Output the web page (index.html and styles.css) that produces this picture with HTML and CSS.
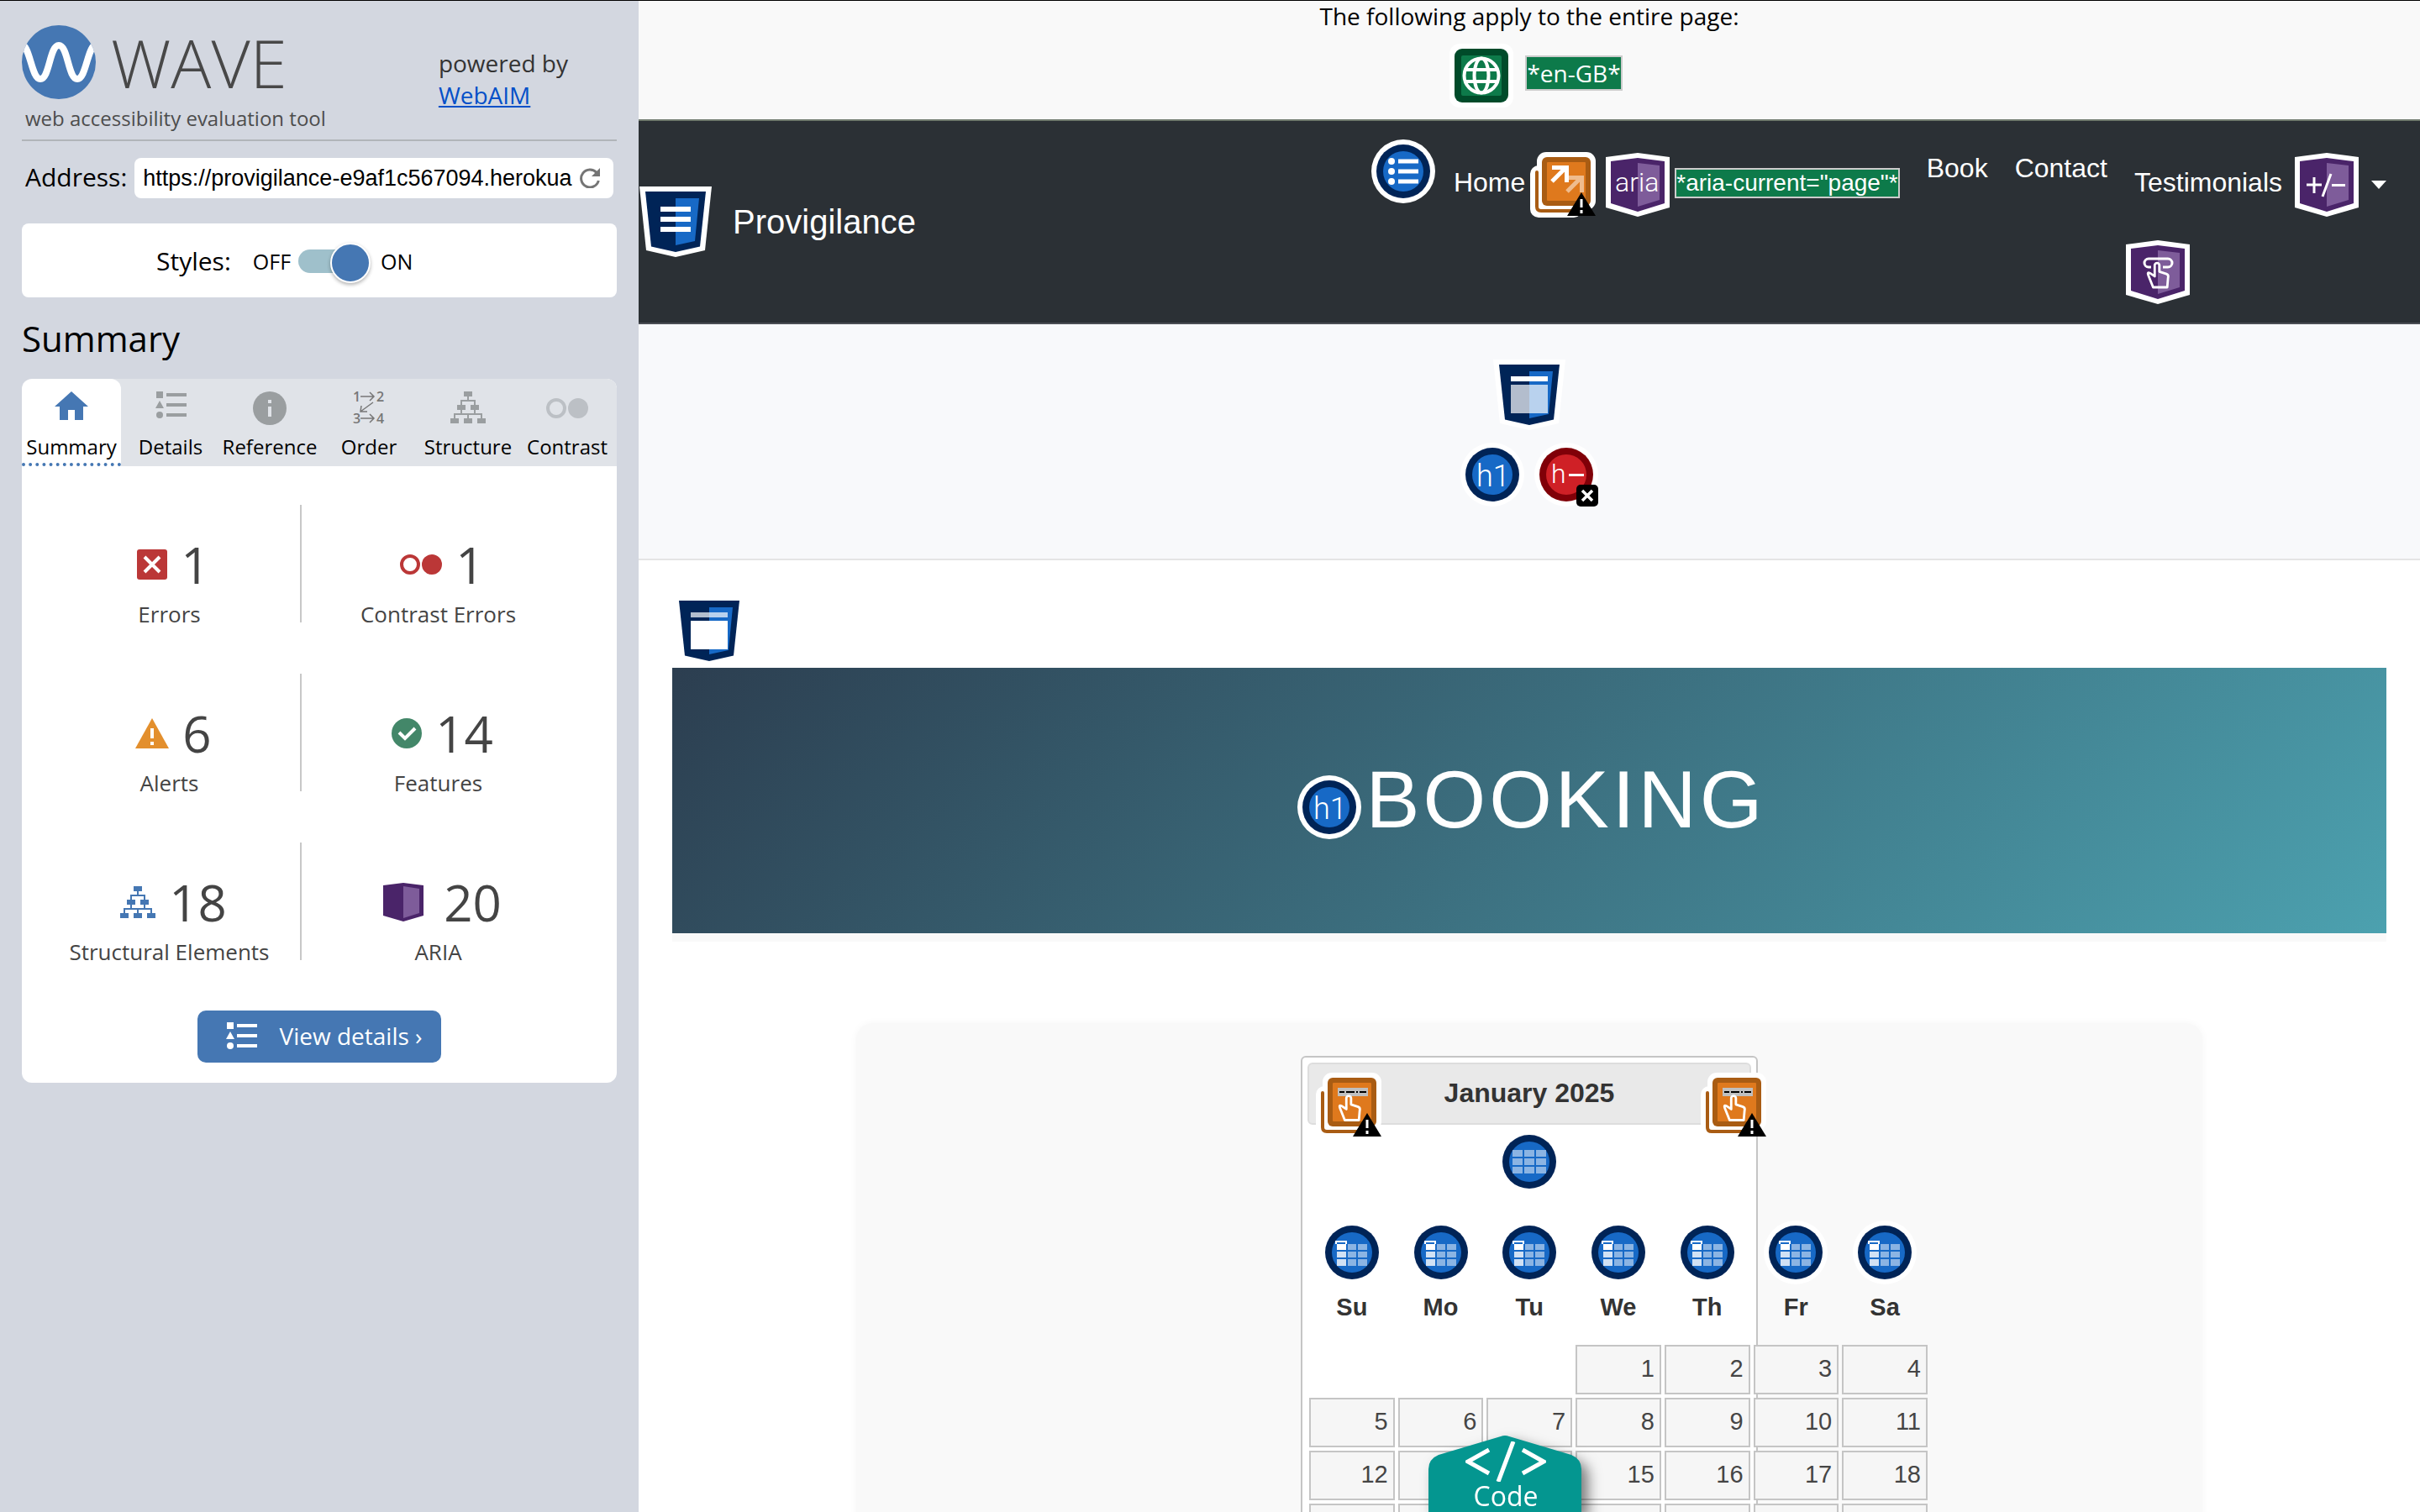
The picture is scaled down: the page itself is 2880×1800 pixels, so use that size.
FILE: index.html
```html
<!DOCTYPE html>
<html lang="en-GB">
<head>
<meta charset="utf-8">
<title>WAVE Report - Provigilance</title>
<link rel="stylesheet" href="styles.css">
</head>
<body>
<svg class="sprite" aria-hidden="true">
  <symbol id="i-blue" viewBox="0 0 76 76"><circle cx="38" cy="38" r="38" fill="#fff"/><circle cx="38" cy="38" r="32" fill="#002457"/><circle cx="38" cy="38" r="24" fill="#1769c6"/></symbol>
  <symbol id="i-table" viewBox="0 0 76 76"><use href="#i-blue"/><path fill="#8bb4e3" d="M18 24h12v8H18zM32 24h12v8H32zM46 24h12v8H46zM18 34h12v8H18zM32 34h12v8H32zM46 34h12v8H46zM18 44h12v8H18zM32 44h12v8H32zM46 44h12v8H46z"/></symbol>
  <symbol id="i-th" viewBox="0 0 76 76"><use href="#i-blue"/><path fill="none" stroke="#fff" stroke-width="2" d="M19 28v-3h12v3"/><path fill="#fff" d="M20 28h11v7H20z"/><path fill="#d1e1f4" d="M20 37h11v7H20zM20 46h11v8H20z"/><path fill="#8bb4e3" d="M33 28h10v7H33zM45 28h11v7H45zM33 37h10v7H33zM45 37h11v7H45zM33 46h10v8H33zM45 46h11v8H45z"/></symbol>
  <symbol id="i-lang" viewBox="0 0 76 76"><rect width="76" height="76" rx="12" fill="#fff"/><rect x="6" y="6" width="64" height="64" rx="9" fill="#004b2a"/><rect x="14" y="14" width="48" height="48" rx="2" fill="#0d7a4a"/><g fill="none" stroke="#fff" stroke-width="4"><circle cx="38" cy="38" r="20.500"/><ellipse cx="38" cy="38" rx="8.500" ry="20.500"/><path d="M19 31h38M19 45h38"/></g></symbol>
  <symbol id="i-shield" viewBox="0 0 86 84"><path fill="#fff" d="M0 0h86l-8 76-35 8-35-8z"/><path fill="#002457" d="M7 6h72l-7 65.500L43 78l-29-6.500z"/><path fill="#1769c6" d="M43 14h28l-5 51-23 5z"/></symbol>
  <symbol id="i-aria" viewBox="0 0 76 76"><path fill="#fff" d="M0 5l38-5 38 5v60L38 76 0 65z"/><path fill="#4a2469" d="M6 10l32-4 32 4v50L38 70 6 60z"/><path fill="#7e5c9a" d="M38 12l26 3v41l-26 8z"/></symbol>
  <symbol id="i-alert" viewBox="0 0 78 78"><rect y="16" width="62" height="62" rx="10" fill="#fff"/><rect x="8" width="70" height="69" rx="11" fill="#fff"/><path fill="none" stroke="#a95c13" stroke-width="4" stroke-linecap="round" d="M8 24v41q0 5 5 5h45"/><rect x="14" y="6" width="58" height="58" rx="6" fill="#a95c13"/><rect x="20" y="12" width="46" height="46" rx="1" fill="#df791d"/></symbol>
  <symbol id="i-warn" viewBox="0 0 78 78"><path fill="#000" d="M61 48l17 28H44z"/><path fill="#fff" d="M59.500 56h3v10h-3zM59.500 69h3v4h-3z"/></symbol>
  <symbol id="i-hand" viewBox="0 0 30 36"><path fill="none" stroke="#fff" stroke-width="3" stroke-linejoin="round" d="M11 19V5a3 3 0 0 1 6 0v8l9 3q3 1 2 5l-1 12H9L3 18q-2-5 2-3z"/></symbol>
  <symbol id="i-details" viewBox="0 0 37 32"><path d="M1 0h8v8H1zM5 11l5 9H0zM13 2h24v4H13zM13 14h24v4H13zM13 26h24v4H13z"/><circle cx="5" cy="28" r="4"/></symbol>
  <symbol id="i-tree" viewBox="0 0 42 38"><path d="M16 0h10v6H16zM8 16h10v6H8zM24 16h10v6H24zM0 32h10v6H0zM16 32h10v6H16zM32 32h10v6H32z"/><path fill="none" stroke="currentColor" stroke-width="2" d="M21 6v5M13 16v-5h16v5M13 22v5M29 22v5M5 32v-5h32v5M21 27v5"/></symbol>
  <symbol id="i-dots" viewBox="0 0 50 24"><circle cx="12" cy="12" r="10" fill="none" stroke="currentColor" stroke-width="4"/><circle cx="38" cy="12" r="12"/></symbol>
  <symbol id="i-prevnext" viewBox="0 0 78 78"><use href="#i-alert"/><path fill="#bfbfbf" d="M26 18h36v10H26z"/><path fill="#000" d="M28 22h6v2h-6zM36 22h10v2H36zM48 22h2v2h-2zM52 22h8v2h-8z"/><use href="#i-hand" x="26" y="25" width="28" height="35"/><use href="#i-warn"/></symbol>
</svg>

<aside class="sidebar">
  <header class="brandbar">
    <div>
      <div class="logo-row">
        <svg class="logo" viewBox="0 0 88 88"><defs><clipPath id="lc"><circle cx="44" cy="44" r="44"/></clipPath></defs><circle cx="44" cy="44" r="44" fill="#4577b3"/><path clip-path="url(#lc)" fill="none" stroke="#fff" stroke-width="8" d="M-2 22C10 22 11 64 22 64S33 24 44 24s11 40 22 40S78 22 90 22"/></svg>
        <span class="logo-name">WAVE</span>
      </div>
      <p class="tagline">web accessibility evaluation tool</p>
    </div>
    <p class="powered">powered by<br><a href="#webaim">WebAIM</a></p>
  </header>

  <form class="address">
    <label for="url">Address:</label>
    <div class="url-box">
      <input id="url" type="text" value="https://provigilance-e9af1c567094.herokua">
      <button type="button" class="reload" aria-label="Reload"><svg viewBox="0 0 24 24"><path fill="none" stroke="#757575" stroke-width="3" d="M20 5.500A10.500 10.500 0 1 0 22.300 15"/><path fill="#757575" d="M24 0v10H14z"/></svg></button>
    </div>
  </form>

  <div class="styles-box">
    <label for="styles" class="styles-label">Styles:</label>
    <span class="state">OFF</span>
    <input id="styles" class="toggle" type="checkbox" role="switch" checked>
    <span class="state">ON</span>
  </div>

  <h2 class="panel-title">Summary</h2>
  <section class="panel">
    <div class="tabs" role="tablist">
      <button class="tab active" role="tab" aria-selected="true"><svg width="40" height="40" viewBox="0 0 40 40"><path fill="#4577b3" d="M20 0l20 18h-6v16H24V22h-8v12H6V18H0z"/></svg>Summary</button>
      <button class="tab" role="tab"><svg width="37" height="40" viewBox="0 0 37 40"><use href="#i-details" width="37" height="32"/></svg>Details</button>
      <button class="tab" role="tab"><svg width="40" height="40" viewBox="0 0 40 40"><circle cx="20" cy="20" r="20"/><path fill="#e0e3e8" d="M18 10h4v4h-4zM18 18h4v12h-4z"/></svg>Reference</button>
      <button class="tab order" role="tab"><svg width="38" height="40" viewBox="0 0 38 40"><g class="order-num"><text x="0" y="12">1</text><text x="28" y="12">2</text><text x="0" y="38">3</text><text x="28" y="38">4</text></g><path fill="none" stroke="#777" stroke-width="1.500" d="M9 6h16M20 1l5 5-5 5M9 32h16M20 27l5 5-5 5M24 13L9 24M10 17l-1 7h8"/></svg>Order</button>
      <button class="tab" role="tab"><svg width="42" height="40" viewBox="0 0 42 40"><use href="#i-tree" width="42" height="38"/></svg>Structure</button>
      <button class="tab faint" role="tab"><svg width="50" height="40" viewBox="0 0 50 40"><use href="#i-dots" y="8" width="50" height="24"/></svg>Contrast</button>
    </div>
    <div class="stats">
      <div class="stat"><p class="count"><svg width="36" height="36" viewBox="0 0 36 36"><rect width="36" height="36" rx="3" fill="#bb3737"/><path stroke="#fff" stroke-width="4" d="M9 9l18 18M27 9L9 27"/></svg>1</p><p class="name">Errors</p></div>
      <div class="stat"><p class="count red"><svg width="50" height="24"><use href="#i-dots" width="50" height="24"/></svg>1</p><p class="name">Contrast Errors</p></div>
      <div class="stat"><p class="count"><svg width="40" height="36" viewBox="0 0 40 36"><path fill="#e38f2d" d="M20 0l20 36H0z"/><path fill="#fff" d="M18 12h4v12h-4zM18 28h4v4h-4z"/></svg>6</p><p class="name">Alerts</p></div>
      <div class="stat"><p class="count"><svg width="36" height="36" viewBox="0 0 36 36"><circle cx="18" cy="18" r="18" fill="#438769"/><path fill="none" stroke="#fff" stroke-width="4" d="M9 17l7 7 12-12"/></svg>14</p><p class="name">Features</p></div>
      <div class="stat"><p class="count blue"><svg width="42" height="38"><use href="#i-tree" width="42" height="38"/></svg>18</p><p class="name">Structural Elements</p></div>
      <div class="stat"><p class="count wide"><svg width="48" height="46" viewBox="0 0 48 46"><path fill="#4a2469" d="M0 3l24-3 24 3v36L24 46 0 39z"/><path fill="#7e5c9a" d="M24 4l19 3v29l-19 6z"/></svg>20</p><p class="name">ARIA</p></div>
    </div>
    <button class="view-details"><svg width="37" height="32"><use href="#i-details" width="37" height="32"/></svg>View details ›</button>
  </section>
</aside>

<main class="page">
  <section class="page-flags">
    <p>The following apply to the entire page:</p>
    <div class="flag-row">
      <svg class="ico"><use href="#i-lang"/></svg>
      <span class="flag-text">*en-GB*</span>
    </div>
  </section>

  <nav class="site-nav">
    <div class="site-brand">
      <svg class="shield" viewBox="0 0 86 84"><use href="#i-shield"/><path fill="#fff" d="M25 24h36v6H25zM25 36h36v6H25zM25 48h36v6H25z"/></svg>
      <a href="#home">Provigilance</a>
    </div>
    <ul class="menu">
      <li class="menu-start"><svg class="ico" viewBox="0 0 76 76"><use href="#i-blue"/><g fill="#fff"><circle cx="24" cy="26" r="4"/><circle cx="24" cy="38" r="4"/><circle cx="24" cy="50" r="4"/><path d="M32 23.500h24v5H32zM32 35.500h24v5H32zM32 47.500h24v5H32z"/></g></svg></li>
      <li class="menu-row menu-home">
        <a href="#home">Home</a>
        <svg class="ico-alert" viewBox="0 0 78 78"><use href="#i-alert"/><g fill="none" stroke="#fff" stroke-width="5"><path d="M26 18.500h17.500V36M26 35l17-17"/><path opacity=".5" d="M46 30.500h15.500V48M44 47l17-17"/></g><use href="#i-warn"/></svg>
        <svg class="ico" viewBox="0 0 76 76"><use href="#i-aria"/><text x="11" y="46" class="glyph glyph-32">aria</text></svg>
        <span class="flag-text aria-text">*aria-current="page"*</span>
      </li>
      <li class="menu-plain"><a href="#book">Book</a></li>
      <li class="menu-plain"><a href="#contact">Contact</a></li>
      <li>
        <div class="menu-row menu-drop">
          <a href="#testimonials">Testimonials</a>
          <svg class="ico" viewBox="0 0 76 76"><use href="#i-aria"/><path fill="none" stroke="#fff" stroke-width="3" d="M14 38h18M23 29v19M33 52l10-27M44 38.500h16"/></svg>
          <svg class="caret" width="18" height="10" viewBox="0 0 18 10"><path fill="#fff" d="M0 0h18L9 10z"/></svg>
        </div>
        <svg class="ico drop-mark" viewBox="0 0 76 76"><use href="#i-aria"/><path fill="none" stroke="#fff" stroke-width="3" d="M30 32h-3a5 5 0 0 1 0-10h23a5 5 0 0 1 0 10h-6"/><use href="#i-hand" x="24" y="25" width="28" height="34"/></svg>
      </li>
    </ul>
  </nav>

  <header class="head-area">
    <svg class="shield" viewBox="0 0 86 84"><use href="#i-shield"/><path fill="#fff" d="M21 20h44v6H21z"/><path fill="#fff" opacity=".7" d="M21 30h44v34H21z"/></svg>
    <div class="head-marks">
      <svg class="ico" viewBox="0 0 76 76"><use href="#i-blue"/><text x="19" y="52" class="glyph glyph-36">h1</text></svg>
      <svg class="ico" viewBox="0 0 76 76"><circle cx="38" cy="38" r="38" fill="#fff"/><circle cx="38" cy="38" r="32" fill="#800008"/><circle cx="38" cy="38" r="24" fill="#cf2026"/><text x="20" y="48" class="glyph glyph-32">h</text><path fill="#fff" d="M41 37h18v3H41z"/><rect x="50" y="50" width="26" height="26" rx="5"/><path stroke="#fff" stroke-width="3.500" d="M57 57l12 12M69 57L57 69"/></svg>
    </div>
  </header>

  <div class="content">
    <svg class="shield" viewBox="0 0 86 84"><use href="#i-shield"/><path fill="#fff" opacity=".7" d="M21 20h44v6H21z"/><path fill="#fff" d="M21 30h44v34H21z"/></svg>
    <section class="hero">
      <svg class="ico hero-mark" viewBox="0 0 76 76"><use href="#i-blue"/><text x="19" y="52" class="glyph glyph-36">h1</text></svg>
      <h1>BOOKING</h1>
    </section>
    <section class="booking">
      <div class="picker">
        <div class="picker-head">
          <button class="step prev" aria-label="Prev"><svg class="ico-alert"><use href="#i-prevnext"/></svg></button>
          January 2025
          <button class="step next" aria-label="Next"><svg class="ico-alert"><use href="#i-prevnext"/></svg></button>
        </div>
        <div class="table-mark"><svg class="ico"><use href="#i-table"/></svg></div>
        <table class="days">
          <thead><tr>
            <th><svg class="ico"><use href="#i-th"/></svg>Su</th>
            <th><svg class="ico"><use href="#i-th"/></svg>Mo</th>
            <th><svg class="ico"><use href="#i-th"/></svg>Tu</th>
            <th><svg class="ico"><use href="#i-th"/></svg>We</th>
            <th><svg class="ico"><use href="#i-th"/></svg>Th</th>
            <th><svg class="ico"><use href="#i-th"/></svg>Fr</th>
            <th><svg class="ico"><use href="#i-th"/></svg>Sa</th>
          </tr></thead>
          <tbody>
            <tr><td></td><td></td><td></td><td><a href="#1">1</a></td><td><a href="#2">2</a></td><td><a href="#3">3</a></td><td><a href="#4">4</a></td></tr>
            <tr><td><a href="#5">5</a></td><td><a href="#6">6</a></td><td><a href="#7">7</a></td><td><a href="#8">8</a></td><td><a href="#9">9</a></td><td><a href="#10">10</a></td><td><a href="#11">11</a></td></tr>
            <tr><td><a href="#12">12</a></td><td><a href="#13">13</a></td><td><a href="#14">14</a></td><td><a href="#15">15</a></td><td><a href="#16">16</a></td><td><a href="#17">17</a></td><td><a href="#18">18</a></td></tr>
            <tr><td><a href="#19">19</a></td><td><a href="#20">20</a></td><td><a href="#21">21</a></td><td><a href="#22">22</a></td><td><a href="#23">23</a></td><td><a href="#24">24</a></td><td><a href="#25">25</a></td></tr>
          </tbody>
        </table>
      </div>
    </section>
  </div>

  <button class="code-tab">
    <svg class="code-shape" viewBox="0 0 182 91" preserveAspectRatio="none"><path fill="#049690" d="M0 91V40Q0 28 12 23L86 1q5-2 10 0l74 22q12 5 12 17v51z"/></svg>
    <svg class="code-icon" viewBox="0 0 96 48"><path fill="none" stroke="#fff" stroke-width="5" d="M28 10L3 24l25 14M68 10l25 14-25 14M57 0L39 48"/></svg>
    <span class="code-label">Code</span>
  </button>
</main>
</body>
</html>
```
FILE: styles.css
```css
* { box-sizing: border-box; }
body {
  margin: 0;
  display: flex;
  height: 100vh;
  overflow: hidden;
  border-top: 1px solid #000;
  font-family: "Open Sans", "Noto Sans", sans-serif;
  color: #000;
  background: #fff;
}
p, h1, h2, ul { margin: 0; padding: 0; }
button { font: inherit; border: 0; padding: 0; background: none; color: inherit; }
svg { display: block; flex: none; fill: currentColor; }
.sprite { position: absolute; width: 0; height: 0; }
.ico { width: 76px; height: 76px; color: #000; }
.ico-alert { width: 78px; height: 78px; }
.shield { width: 86px; height: 84px; }
.glyph { font-family: Roboto, sans-serif; font-weight: 300; fill: #fff; }
.glyph-36 { font-size: 36px; }
.glyph-32 { font-size: 32px; }

/* Sidebar */
.sidebar { flex: 0 0 760px; padding: 29px 26px; background: #d3d7e0; }
.brandbar {
  display: flex;
  justify-content: space-between;
  padding-bottom: 9px;
  border-bottom: 2px solid #b1b5b9;
}
.logo-row { display: flex; align-items: center; gap: 18px; height: 88px; }
.logo { width: 88px; height: 88px; }
.logo-name { font-size: 80px; line-height: 88px; font-weight: 300; color: #484848; }
.tagline { margin-top: 7px; padding-left: 4px; font-size: 24px; line-height: 32px; color: #4d4d4d; }
.powered { margin: 26px 58px 0 0; font-size: 28px; line-height: 38px; color: #333; }
.powered a { color: #0550c8; }
.address { display: flex; align-items: center; gap: 9px; margin: 20px 4px 0; font-size: 30px; line-height: 40px; }
.address label { padding-bottom: 3px; }
.url-box { flex: 1; display: flex; align-items: center; height: 48px; padding: 0 16px 0 10px; background: #fff; border-radius: 8px; }
.url-box input {
  flex: 1;
  min-width: 0;
  padding: 0;
  border: 0;
  background: none;
  font: 27px "Liberation Sans", Arial, sans-serif;
  color: #000;
}
.reload svg { width: 24px; height: 24px; }
.styles-box { display: flex; align-items: center; height: 88px; margin-top: 30px; padding: 2px 0 0 160px; background: #fff; border-radius: 8px; }
.styles-label { margin-right: 26px; font-size: 30px; line-height: 40px; }
.state { font-size: 25px; line-height: 32px; }
.toggle {
  appearance: none;
  position: relative;
  width: 84px;
  height: 28px;
  margin: 0 14px 0 9px;
  border-radius: 14px;
  background: #9fc0cb;
}
.toggle::after {
  content: "";
  position: absolute;
  right: -2px;
  top: -8px;
  width: 44px;
  height: 44px;
  border: 2px solid #fff;
  border-radius: 50%;
  background: #4577b3;
  box-shadow: 0 2px 4px rgba(0, 0, 0, .3);
}
.panel-title { margin: 24px 0 23px; font-size: 42px; line-height: 50px; font-weight: 400; }
.panel { padding-bottom: 24px; background: #fff; border-radius: 12px; overflow: hidden; }
.tabs { display: grid; grid-template-columns: repeat(6, 1fr); background: #e0e3e8; }
.tab {
  display: flex;
  flex-direction: column;
  align-items: center;
  gap: 10px;
  height: 104px;
  padding-top: 15px;
  font-size: 24px;
  line-height: 32px;
}
.tab svg { color: #9a9ea0; }
.tab.faint svg { color: #bcc0c5; }
.tab.active { background: #fff; border-radius: 12px 12px 0 0; border-bottom: 4px dotted #4577b3; }
.order-num { font: 600 16px "Open Sans", sans-serif; fill: #777; }
.stats { display: grid; grid-template-columns: 313px 325px; row-gap: 61px; padding: 46px 0 0 20px; }
.stat { height: 140px; padding-top: 41px; text-align: center; color: #444; }
.stat:nth-child(odd) { border-right: 2px solid #c8c8c8; }
.count { display: flex; justify-content: center; align-items: center; gap: 16px; padding-left: 10px; font-size: 60px; line-height: 60px; }
.count.wide { gap: 24px; }
.count.red svg { color: #bb3737; }
.count.blue svg { color: #4577b3; }
.name { margin-top: 13px; font-size: 26px; line-height: 32px; }
.view-details {
  display: flex;
  align-items: center;
  gap: 26px;
  height: 62px;
  margin: 60px auto 0;
  padding: 0 22px 2px 34px;
  border-radius: 10px;
  background: #4577b3;
  color: #fff;
  font-size: 28px;
  line-height: 38px;
}

/* Evaluated page */
.page { position: relative; flex: 1; min-width: 0; font-family: "Liberation Sans", Arial, sans-serif; }
.page-flags {
  height: 143px;
  border-bottom: 2px solid #707a6e;
  background: #f9f9f9;
  text-align: center;
  font: 28px/36px "Open Sans", sans-serif;
}
.flag-row { display: flex; justify-content: center; align-items: center; gap: 14px; margin-top: 15px; padding-left: 16px; }
.flag-text { margin-bottom: 6px; border: 2px solid #ccc; background: #0d7a4a; color: #fff; line-height: 38px; }
.aria-text { margin-bottom: 4px; font-size: 28px; line-height: 32px; }
.site-nav {
  display: flex;
  justify-content: space-between;
  align-items: center;
  height: 242px;
  padding-right: 40px;
  border-bottom: 2px solid #4a4d54;
  background: #2b3035;
  color: #fff;
}
.site-nav a { color: #fff; text-decoration: none; }
.site-brand { display: flex; align-items: center; gap: 25px; padding-left: 1px; font-size: 40px; line-height: 60px; }
.menu { display: flex; gap: 32px; list-style: none; font-size: 32px; line-height: 48px; }
.menu-start { margin-right: -10px; }
.menu-row { display: flex; align-items: center; margin-top: 16px; }
.menu-row a { padding-bottom: 6px; }
.menu-plain { padding-top: 10px; }
.menu-home { gap: 6px; height: 76px; }
.menu-home .ico { margin-left: 6px; }
.menu-drop { gap: 15px; }
.drop-mark { margin: 28px 0 0 -10px; }
.head-area {
  display: flex;
  flex-direction: column;
  align-items: center;
  gap: 15px;
  padding: 42px 0 62px;
  border-bottom: 2px solid #e5e5e5;
  background: #f8f9fb;
}
.head-marks { display: flex; gap: 12px; }
.content { padding: 42px 40px 0; }
.content > .shield { margin-left: 1px; }
.hero {
  display: flex;
  justify-content: center;
  align-items: center;
  gap: 5px;
  height: 316px;
  margin-top: 2px;
  padding-left: 6px;
  background: linear-gradient(135deg, #2c3e50, #4ca1af);
  box-shadow: 0 10px #f9f9f9;
  color: #fff;
}
.hero-mark { margin-top: 16px; }
.hero h1 { padding-bottom: 2px; font-size: 96px; line-height: 116px; font-weight: 400; letter-spacing: 4px; }
.booking {
  max-width: 1602px;
  margin: 107px auto 0;
  padding: 39px;
  border-radius: 20px;
  background: #f9f9f9;
  box-shadow: 0 0 10px rgba(0, 0, 0, .04);
}
.picker {
  width: 544px;
  margin: 0 auto;
  padding: 6px;
  border: 2px solid #c5c5c5;
  border-radius: 6px;
  background: #fff;
  color: #333;
}
.picker-head {
  position: relative;
  height: 74px;
  border: 2px solid #ddd;
  border-radius: 6px;
  background: #e9e9e9;
  text-align: center;
  font-size: 32px;
  line-height: 68px;
  font-weight: 700;
}
.step { position: absolute; top: 10px; }
.prev { left: 8px; }
.next { right: -20px; }
.table-mark { display: flex; justify-content: center; padding-top: 6px; }
.days { width: 740px; table-layout: fixed; border-collapse: collapse; font-size: 29px; }
.days th { height: 178px; padding: 32px 0 0; vertical-align: top; line-height: 54px; }
.days th svg { margin: 0 auto; }
.days td { height: 63px; padding: 2px; }
.days td a {
  display: block;
  height: 59px;
  padding: 0 6px;
  border: 2px solid #c5c5c5;
  background: #f6f6f6;
  color: #454545;
  text-align: right;
  text-decoration: none;
  line-height: 53px;
}
.code-tab {
  position: absolute;
  left: 940px;
  bottom: 0;
  width: 182px;
  height: 91px;
  padding: 4px 0 0 2px;
  color: #fff;
  font-family: "Open Sans", sans-serif;
  filter: drop-shadow(8px 8px 8px rgba(0, 0, 0, .5));
}
.code-shape { position: absolute; inset: 0; width: 100%; height: 100%; }
.code-icon { position: relative; width: 96px; height: 48px; margin: 0 auto; }
.code-label { position: relative; display: block; font-size: 32px; line-height: 34px; }
```
